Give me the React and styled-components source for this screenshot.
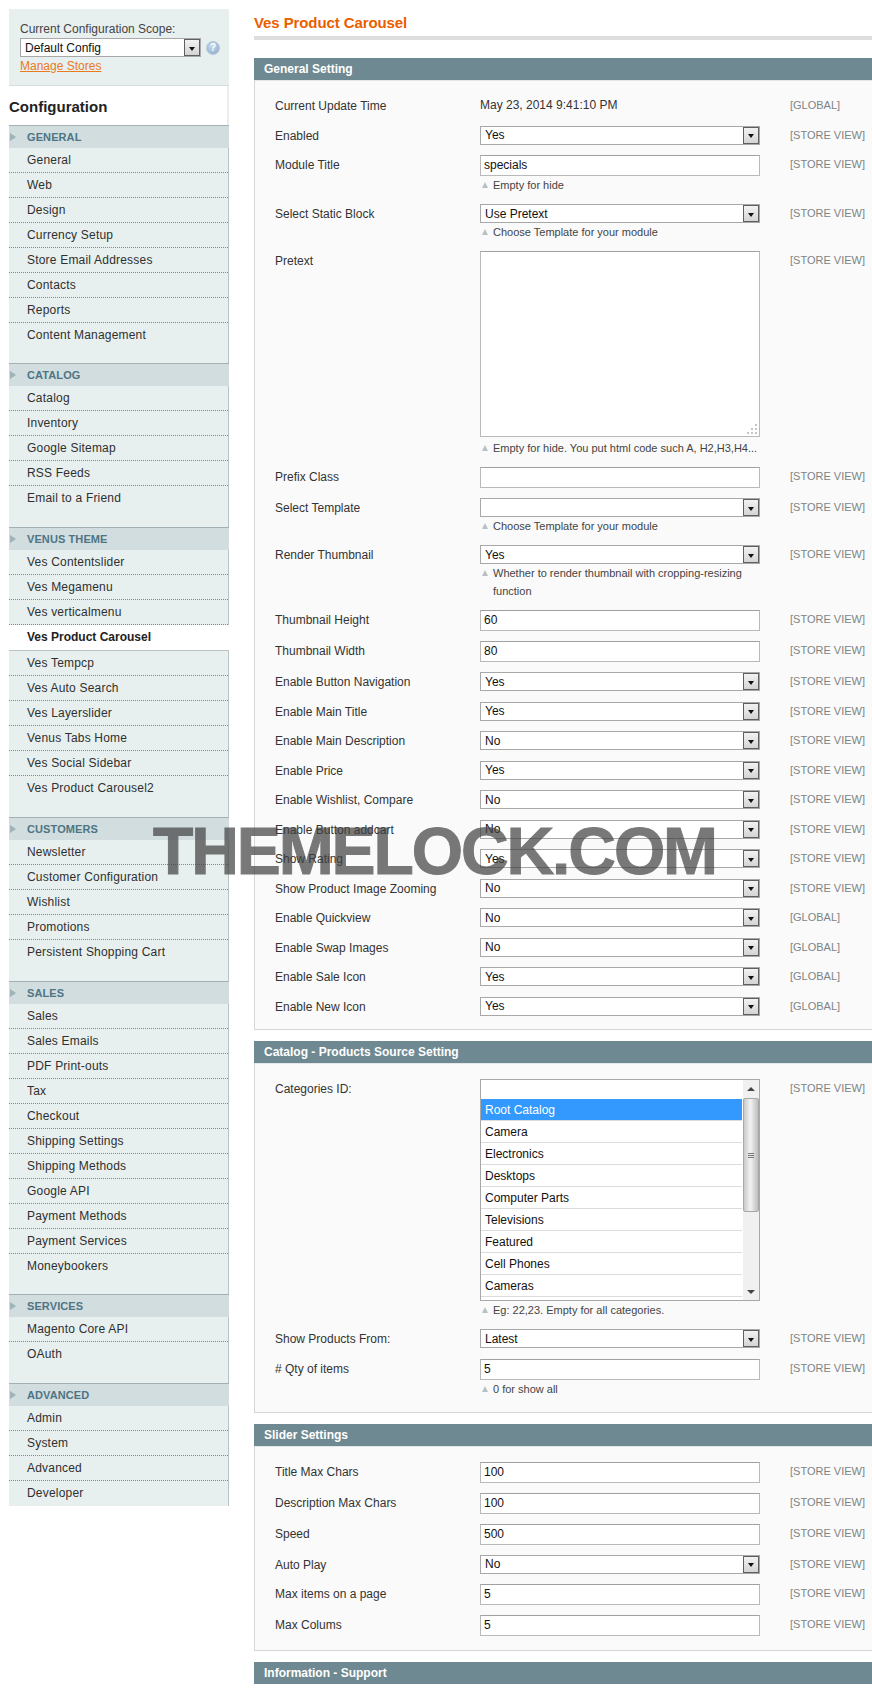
import React from 'react';
import styled, { createGlobalStyle } from 'styled-components';

const GlobalStyle = createGlobalStyle`
  html, body {
    margin: 0;
    padding: 0;
    background: #fff;
  }

  body {
    font-family: "Liberation Sans", Arial, sans-serif;
    font-size: 12px;
    color: #2f2f2f;
  }
`;

const Page = styled.div`
  position: relative;
  display: grid;
  grid-template-columns: 220px 1fr;
  column-gap: 25px;
  width: 872px;
  height: 1697px;
  padding: 9px 0 0 9px;
  box-sizing: border-box;
  overflow: hidden;
`;

const Watermark = styled.div`
  position: absolute;
  left: 153px;
  top: 813px;
  font-size: 66px;
  line-height: 76px;
  font-weight: 700;
  letter-spacing: -2.1px;
  -webkit-text-stroke: 1px #404040;
  white-space: nowrap;
  color: #404040;
  opacity: 0.7;
`;

/* sidebar */
const Sidebar = styled.aside`
  display: flex;
  flex-direction: column;
`;

const ScopeBox = styled.div`
  height: 77px;
  padding: 13px 0 0 11px;
  box-sizing: border-box;
  background: #e7efef;
  border-bottom: 1px solid #d5dddd;
  line-height: 14px;
  color: #444;
`;

const ScopeControls = styled.div`
  display: flex;
  align-items: center;
  gap: 5px;
  margin-top: 2px;
`;

const ManageLink = styled.a`
  display: block;
  margin-top: 2px;
  color: #ea7a1e;
  text-decoration: underline;
`;

const SideTitle = styled.h3`
  margin: 0;
  height: 39px;
  line-height: 42px;
  font-size: 15px;
  font-weight: 700;
  color: #222;
  border-right: 2px solid #eeeeee;
`;

const SectionHead = styled.div`
  position: relative;
  height: 23px;
  padding-left: 18px;
  box-sizing: border-box;
  line-height: 22px;
  font-size: 11px;
  font-weight: 700;
  letter-spacing: 0.1px;
  color: #4e7584;
  background: #d1dddf;
  border-top: 1px solid #a3b1b4;

  &::before {
    content: '';
    position: absolute;
    left: 1px;
    top: 7px;
    border-left: 6px solid #9fb4b8;
    border-top: 4px solid transparent;
    border-bottom: 4px solid transparent;
  }
`;

const SectionItems = styled.div`
  padding-bottom: ${({ $tail }) => $tail}px;
  background: #e7efef;
  border-right: 1px solid #b9c4c5;
`;

const SideItem = styled.div`
  height: 25px;
  padding-left: 18px;
  box-sizing: border-box;
  line-height: 25px;
  letter-spacing: 0.2px;
  color: #2f2f2f;
  border-bottom: 1px dotted #7f8a8a;

  &:last-child {
    border-bottom: 0;
  }

  ${({ $active }) => $active && `
    height: 26px;
    margin-right: -1px;
    background: #fff;
    font-weight: 700;
    color: #222;
    letter-spacing: 0;
    border-bottom: 1px solid #b9c4c5;
  `}
`;

/* form parts */
const Main = styled.main`
  min-width: 0;
`;

const PageTitle = styled.h3`
  margin: 0;
  height: 27px;
  line-height: 28px;
  font-size: 15px;
  font-weight: 700;
  letter-spacing: -0.1px;
  color: #eb5e00;
  border-bottom: 4px solid #dedede;
`;

const Panels = styled.div`
  margin-top: 18px;
`;

const PanelHead = styled.div`
  height: 22px;
  padding-left: 10px;
  line-height: 22px;
  font-size: 12px;
  font-weight: 700;
  color: #fff;
  background: #6f8992;
`;

const PanelBody = styled.div`
  margin-bottom: 11px;
  padding: 15px 0 ${({ $tail }) => $tail}px 20px;
  background: #fafafa;
  border: 1px solid #d6d6d6;
  border-top-color: #e4e7e8;
  border-right: 0;
`;

const Row = styled.div`
  display: grid;
  grid-template-columns: 205px 280px 1fr;
  min-height: 29.5px;
  padding-bottom: 10px;
  box-sizing: border-box;
`;

const Label = styled.div`
  padding-top: 1px;
  line-height: 18px;
  color: #333;
`;

const Value = styled.div`
  line-height: 18px;
  color: #333;
`;

const ScopeTag = styled.div`
  padding-left: 30px;
  line-height: 18px;
  font-size: 11px;
  white-space: nowrap;
  color: #7d8486;
`;

const SelectBox = styled.div`
  position: relative;
  display: flex;
  align-items: center;
  width: ${({ $width }) => $width || '100%'};
  height: 19px;
  padding-left: 4px;
  box-sizing: border-box;
  background: #fff;
  border: 1px solid #a8a8a8;
  font-size: 12px;
  color: #111;
`;

const ArrowButton = styled.span`
  position: absolute;
  right: 0;
  top: 0;
  bottom: 0;
  width: 16px;
  box-sizing: border-box;
  background: linear-gradient(#f2f2f2, #d4d4d4);
  border: 1px solid #5f5f5f;
  display: flex;
  align-items: center;
  justify-content: center;

  &::after {
    content: '';
    margin-top: 2px;
    border-top: 4px solid #111;
    border-left: 3.5px solid transparent;
    border-right: 3.5px solid transparent;
  }
`;

const TextBox = styled.div`
  height: 21px;
  padding-left: 3px;
  box-sizing: border-box;
  line-height: 19px;
  background: #fff;
  border: 1px solid #b9b9b9;
  border-top-color: #a0a0a0;
  color: #111;
`;

const TextAreaBox = styled.div`
  position: relative;
  height: 186px;
  box-sizing: border-box;
  background: #fff;
  border: 1px solid #b9b9b9;
  border-top-color: #a0a0a0;
`;

const Grip = styled.svg`
  position: absolute;
  right: 1px;
  bottom: 1px;
`;

const Note = styled.div`
  position: relative;
  margin-top: ${({ $after }) => ($after ? 2 : 0)}px;
  padding-left: 13px;
  line-height: 18px;
  font-size: 11px;
  color: #444;

  &::before {
    content: '';
    position: absolute;
    left: 2px;
    top: 6px;
    border-bottom: 6px solid #b6c2c4;
    border-left: 3.5px solid transparent;
    border-right: 3.5px solid transparent;
  }
`;

const ListBox = styled.div`
  position: relative;
  height: 222px;
  box-sizing: border-box;
  background: #fff;
  border: 1px solid #a8a8a8;
  overflow: hidden;
`;

const ListItem = styled.div`
  height: 22px;
  margin-right: 17px;
  padding-left: 4px;
  box-sizing: border-box;
  line-height: 22px;
  color: ${({ $selected }) => ($selected ? '#fff' : '#111')};
  background: ${({ $selected }) => ($selected ? '#3399ff' : '#fff')};
  border-bottom: 1px solid #dcdcdc;
`;

const ListBlank = styled.div`
  height: 19px;
`;

const ScrollTrack = styled.div`
  position: absolute;
  right: 0;
  top: 0;
  bottom: 0;
  width: 16px;
  background: #f0f0f0;
`;

const ScrollThumb = styled.div`
  position: absolute;
  left: 0;
  right: 0;
  top: 18px;
  height: 114px;
  box-sizing: border-box;
  background: linear-gradient(90deg, #c9c9c9, #f2f2f2 45%, #bdbdbd);
  border: 1px solid #a9a9a9;
  border-radius: 2px;
  display: flex;
  align-items: center;
  justify-content: center;
`;

const ScrollArrow = styled.span`
  position: absolute;
  left: 4px;
  ${({ $down }) => ($down ? 'bottom: 6px;' : 'top: 7px;')}
  border-left: 4px solid transparent;
  border-right: 4px solid transparent;
  ${({ $down }) => ($down ? 'border-top' : 'border-bottom')}: 4px solid #444;
`;

const HelpBadge = styled.span`
  width: 14px;
  height: 14px;
  border-radius: 50%;
  background: radial-gradient(circle at 40% 35%, #c6d9ea, #88a9c9);
  border: 1px solid #b5c8d8;
  box-sizing: border-box;
  display: flex;
  align-items: center;
  justify-content: center;
  font-size: 10px;
  font-weight: 700;
  color: #fff;
`;

const menu = [
  { title: 'GENERAL', tail: 15, items: ['General', 'Web', 'Design', 'Currency Setup', 'Store Email Addresses', 'Contacts', 'Reports', 'Content Management'] },
  { title: 'CATALOG', tail: 16, items: ['Catalog', 'Inventory', 'Google Sitemap', 'RSS Feeds', 'Email to a Friend'] },
  { title: 'VENUS THEME', tail: 16, items: ['Ves Contentslider', 'Ves Megamenu', 'Ves verticalmenu', 'Ves Product Carousel', 'Ves Tempcp', 'Ves Auto Search', 'Ves Layerslider', 'Venus Tabs Home', 'Ves Social Sidebar', 'Ves Product Carousel2'] },
  { title: 'CUSTOMERS', tail: 16, items: ['Newsletter', 'Customer Configuration', 'Wishlist', 'Promotions', 'Persistent Shopping Cart'] },
  { title: 'SALES', tail: 15, items: ['Sales', 'Sales Emails', 'PDF Print-outs', 'Tax', 'Checkout', 'Shipping Settings', 'Shipping Methods', 'Google API', 'Payment Methods', 'Payment Services', 'Moneybookers'] },
  { title: 'SERVICES', tail: 16, items: ['Magento Core API', 'OAuth'] },
  { title: 'ADVANCED', tail: 0, items: ['Admin', 'System', 'Advanced', 'Developer'] },
];

const STORE = '[STORE VIEW]';
const GLOBAL = '[GLOBAL]';

const generalRows = [
  { label: 'Current Update Time', type: 'value', value: 'May 23, 2014 9:41:10 PM', scope: GLOBAL },
  { label: 'Enabled', type: 'select', value: 'Yes', scope: STORE },
  { label: 'Module Title', type: 'text', value: 'specials', note: 'Empty for hide', scope: STORE },
  { label: 'Select Static Block', type: 'select', value: 'Use Pretext', note: 'Choose Template for your module', scope: STORE },
  { label: 'Pretext', type: 'area', note: 'Empty for hide. You put html code such A, H2,H3,H4...', scope: STORE },
  { label: 'Prefix Class', type: 'text', value: '', scope: STORE },
  { label: 'Select Template', type: 'select', value: '', note: 'Choose Template for your module', scope: STORE },
  { label: 'Render Thumbnail', type: 'select', value: 'Yes', note: 'Whether to render thumbnail with cropping-resizing function', scope: STORE },
  { label: 'Thumbnail Height', type: 'text', value: '60', scope: STORE },
  { label: 'Thumbnail Width', type: 'text', value: '80', scope: STORE },
  { label: 'Enable Button Navigation', type: 'select', value: 'Yes', scope: STORE },
  { label: 'Enable Main Title', type: 'select', value: 'Yes', scope: STORE },
  { label: 'Enable Main Description', type: 'select', value: 'No', scope: STORE },
  { label: 'Enable Price', type: 'select', value: 'Yes', scope: STORE },
  { label: 'Enable Wishlist, Compare', type: 'select', value: 'No', scope: STORE },
  { label: 'Enable Button addcart', type: 'select', value: 'No', scope: STORE },
  { label: 'Show Rating', type: 'select', value: 'Yes', scope: STORE },
  { label: 'Show Product Image Zooming', type: 'select', value: 'No', scope: STORE },
  { label: 'Enable Quickview', type: 'select', value: 'No', scope: GLOBAL },
  { label: 'Enable Swap Images', type: 'select', value: 'No', scope: GLOBAL },
  { label: 'Enable Sale Icon', type: 'select', value: 'Yes', scope: GLOBAL },
  { label: 'Enable New Icon', type: 'select', value: 'Yes', scope: GLOBAL },
];

const catalogRows = [
  { label: 'Categories ID:', type: 'list', note: 'Eg: 22,23. Empty for all categories.', scope: STORE },
  { label: 'Show Products From:', type: 'select', value: 'Latest', scope: STORE },
  { label: '# Qty of items', type: 'text', value: '5', note: '0 for show all', scope: STORE },
];

const sliderRows = [
  { label: 'Title Max Chars', type: 'text', value: '100', scope: STORE },
  { label: 'Description Max Chars', type: 'text', value: '100', scope: STORE },
  { label: 'Speed', type: 'text', value: '500', scope: STORE },
  { label: 'Auto Play', type: 'select', value: 'No', scope: STORE },
  { label: 'Max items on a page', type: 'text', value: '5', scope: STORE },
  { label: 'Max Colums', type: 'text', value: '5', scope: STORE },
];

const categories = ['Root Catalog', 'Camera', 'Electronics', 'Desktops', 'Computer Parts', 'Televisions', 'Featured', 'Cell Phones', 'Cameras'];

const Select = ({ value, width }) => (
  <SelectBox $width={width}>
    {value}
    <ArrowButton />
  </SelectBox>
);

const CategoryList = () => (
  <ListBox>
    <ListBlank />
    {categories.map((name, i) => (
      <ListItem key={name} $selected={i === 0}>{name}</ListItem>
    ))}
    <ScrollTrack>
      <ScrollArrow />
      <ScrollThumb>
        <svg width="6" height="5" viewBox="0 0 6 5">
          <path d="M0 .5h6M0 2.5h6M0 4.5h6" stroke="#777" strokeWidth="1" />
        </svg>
      </ScrollThumb>
      <ScrollArrow $down />
    </ScrollTrack>
  </ListBox>
);

const Field = ({ row }) => {
  if (row.type === 'value') return <Value>{row.value}</Value>;
  if (row.type === 'select') return <Select value={row.value} />;
  if (row.type === 'text') return <TextBox>{row.value}</TextBox>;
  if (row.type === 'list') return <CategoryList />;
  return (
    <TextAreaBox>
      <Grip width="12" height="12" viewBox="0 0 12 12">
        <path d="M9 1h2v2H9zM9 5h2v2H9zM5 5h2v2H5zM9 9h2v2H9zM5 9h2v2H5zM1 9h2v2H1z" fill="#c4c4c4" />
      </Grip>
    </TextAreaBox>
  );
};

const Panel = ({ title, rows, tail = 4 }) => (
  <>
    <PanelHead>{title}</PanelHead>
    {rows && (
      <PanelBody $tail={tail}>
        {rows.map(row => (
          <Row key={row.label}>
            <Label>{row.label}</Label>
            <div>
              <Field row={row} />
              {row.note && <Note $after={row.type === 'area'}>{row.note}</Note>}
            </div>
            <ScopeTag>{row.scope}</ScopeTag>
          </Row>
        ))}
      </PanelBody>
    )}
  </>
);

const App = () => (
  <Page>
    <GlobalStyle />
    <Sidebar>
      <ScopeBox>
        Current Configuration Scope:
        <ScopeControls>
          <Select value="Default Config" width="181px" />
          <HelpBadge>?</HelpBadge>
        </ScopeControls>
        <ManageLink>Manage Stores</ManageLink>
      </ScopeBox>
      <SideTitle>Configuration</SideTitle>
      {menu.map(section => (
        <div key={section.title}>
          <SectionHead>{section.title}</SectionHead>
          <SectionItems $tail={section.tail}>
            {section.items.map(item => (
              <SideItem key={item} $active={item === 'Ves Product Carousel'}>{item}</SideItem>
            ))}
          </SectionItems>
        </div>
      ))}
    </Sidebar>
    <Main>
      <PageTitle>Ves Product Carousel</PageTitle>
      <Panels>
        <Panel title="General Setting" rows={generalRows} tail={3} />
        <Panel title="Catalog - Products Source Setting" rows={catalogRows} />
        <Panel title="Slider Settings" rows={sliderRows} />
        <Panel title="Information - Support" />
      </Panels>
    </Main>
    <Watermark>THEMELOCK.COM</Watermark>
  </Page>
);

export default App;
